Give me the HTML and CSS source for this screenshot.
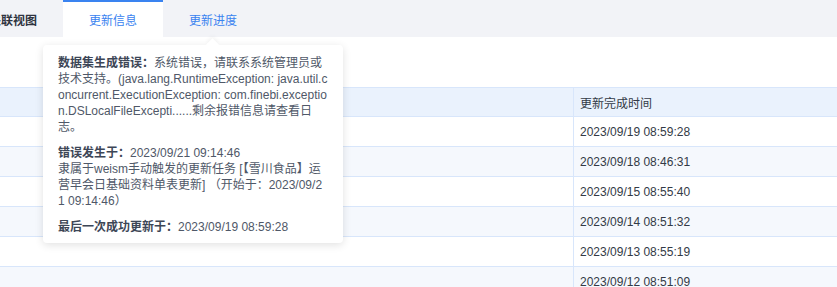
FILE: index.html
```html
<!DOCTYPE html>
<html lang="zh-CN">
<head>
<meta charset="utf-8">
<title>更新信息</title>
<link rel="stylesheet" href="styles.css">
</head>
<body>
<div class="page">
  <div class="tabs">
    <div class="tab tab-plain">关联视图</div>
    <div class="tab tab-active">更新信息</div>
    <div class="tab">更新进度</div>
  </div>
  <div class="content">
    <table class="grid">
      <thead>
        <tr><th class="col-a"></th><th class="col-b">更新完成时间</th></tr>
      </thead>
      <tbody>
        <tr><td></td><td>2023/09/19 08:59:28</td></tr>
        <tr class="stripe"><td></td><td>2023/09/18 08:46:31</td></tr>
        <tr><td></td><td>2023/09/15 08:55:40</td></tr>
        <tr class="stripe"><td></td><td>2023/09/14 08:51:32</td></tr>
        <tr><td></td><td>2023/09/13 08:55:19</td></tr>
        <tr class="stripe"><td></td><td>2023/09/12 08:51:09</td></tr>
      </tbody>
    </table>
  </div>
  <div class="tooltip">
    <p class="tip-block"><b>数据集生成错误：</b>系统错误，请联系系统管理员或技术支持。(java.lang.RuntimeException: java.util.concurrent.ExecutionException: com.finebi.exception.DSLocalFileExcepti......剩余报错信息请查看日志。</p>
    <p class="tip-block"><b>错误发生于：</b>2023/09/21 09:14:46<br>隶属于weism手动触发的更新任务 [【雪川食品】运营早会日基础资料单表更新] （开始于：2023/09/21 09:14:46）</p>
    <p class="tip-block"><b>最后一次成功更新于：</b>2023/09/19 08:59:28</p>
  </div>
</div>
</body>
</html>
```

FILE: styles.css
```css
html, body {
  margin: 0;
  padding: 0;
  background: #ffffff;
}

body {
  font-family: "Liberation Sans", "Noto Sans CJK SC", sans-serif;
  font-size: 12px;
  color: #333333;
  overflow: hidden;
}

.page {
  position: relative;
  width: 837px;
  height: 287px;
  overflow: hidden;
}

.tabs {
  display: flex;
  height: 37px;
  background: #f2f3f7;
  margin-left: -37px;
}

.tab {
  width: 100px;
  box-sizing: border-box;
  display: flex;
  align-items: center;
  justify-content: center;
  padding-top: 2px;
  color: #3a83f0;
  font-size: 12px;
}

.tab-plain {
  color: #2f3440;
  font-weight: bold;
}

.tab-active {
  background: #ffffff;
  border-top: 2px solid #3a83f0;
  padding-top: 0;
}

.content {
  padding-top: 50px;
}

.grid {
  width: 100%;
  border-collapse: collapse;
  table-layout: fixed;
}

.grid th,
.grid td {
  height: 29px;
  padding: 0 6px;
  text-align: left;
  font-weight: normal;
  font-size: 12px;
  color: #333a46;
  border-top: 1px solid #d8e6fb;
  border-bottom: 1px solid #d8e6fb;
  white-space: nowrap;
  overflow: hidden;
}

.grid th {
  height: 28px;
  background: #eaf2fd;
}

.grid .col-a {
  width: 561px;
}

.grid tr > :nth-child(2) {
  border-left: 1px solid #d8e6fb;
}

.grid .stripe td {
  background: #f5f8fd;
}

.tooltip {
  position: absolute;
  left: 43px;
  top: 45px;
  width: 300px;
  box-sizing: border-box;
  padding: 10px 15px 8px;
  background: #ffffff;
  border-radius: 4px;
  box-shadow: 0 2px 8px rgba(0, 0, 0, 0.12);
  color: #4f5868;
  line-height: 16px;
  word-break: break-all;
}

.tooltip::before {
  content: "";
  position: absolute;
  left: 165px;
  top: -5px;
  width: 9px;
  height: 9px;
  background: #ffffff;
  transform: rotate(45deg);
  box-shadow: -2px -2px 4px rgba(0, 0, 0, 0.04);
}

.tip-block {
  position: relative;
  margin: 0 0 10px;
}

.tip-block:last-child {
  margin-bottom: 0;
}

.tip-block b {
  color: #3d4656;
  font-weight: bold;
}
```
